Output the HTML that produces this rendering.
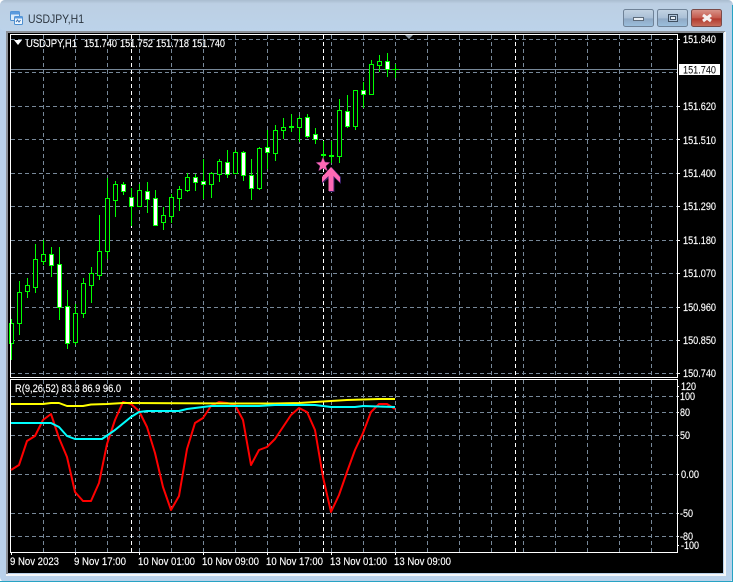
<!DOCTYPE html>
<html><head><meta charset="utf-8"><style>
html,body{margin:0;padding:0;background:#fff}
body{width:735px;height:583px;overflow:hidden}
svg{display:block}
text{font-family:"Liberation Sans",sans-serif;font-size:11px;fill:#fff;stroke:#fff;stroke-width:.15}
</style></head><body>
<svg width="735" height="583" viewBox="0 0 735 583" xmlns="http://www.w3.org/2000/svg">
<defs>
<linearGradient id="tb" x1="0" y1="0" x2="0" y2="1"><stop offset="0" stop-color="#a9bccf"/><stop offset=".12" stop-color="#bccfe3"/><stop offset="1" stop-color="#bcd3ea"/></linearGradient>
<linearGradient id="bb" x1="0" y1="0" x2="0" y2="1"><stop offset="0" stop-color="#c3d3e3"/><stop offset=".5" stop-color="#a9bfd6"/><stop offset=".55" stop-color="#8fa9c5"/><stop offset="1" stop-color="#9cc0de"/></linearGradient>
<linearGradient id="cb" x1="0" y1="0" x2="0" y2="1"><stop offset="0" stop-color="#d9968c"/><stop offset=".5" stop-color="#c4594c"/><stop offset=".55" stop-color="#b23a2e"/><stop offset="1" stop-color="#c8705f"/></linearGradient>
</defs>
<rect x="0" y="0" width="733" height="582" rx="5" fill="#b9d1ea"/>
<rect x="0" y="0" width="733" height="31" rx="5" fill="url(#tb)"/>
<path d="M732.5 5V581.5H0" fill="none" stroke="#27a3c4" stroke-width="1"/>
<!-- title -->
<rect x="10.5" y="11.5" width="9" height="9" rx="1" fill="#dcebfa" stroke="#4d8fd0"/>
<rect x="10.5" y="11.5" width="9" height="3" fill="#5a9ade"/>
<rect x="14.5" y="16.5" width="8" height="8" rx="1" fill="#eef6fd" stroke="#4d8fd0"/>
<rect x="14.5" y="16.5" width="8" height="2" fill="#5a9ade"/>
<path d="M16 22l1.5-2 1.500 2 1.500-2" fill="none" stroke="#3a70b0"/>
<text x="28" y="23" style="font-size:12px;fill:#2b3540;stroke:none" textLength="56" lengthAdjust="spacingAndGlyphs">USDJPY,H1</text>
<!-- buttons -->
<rect x="623.500" y="9.500" width="30" height="17" rx="2" fill="url(#bb)" stroke="#6f8297"/>
<rect x="657.500" y="9.500" width="30" height="17" rx="2" fill="url(#bb)" stroke="#6f8297"/>
<rect x="691.500" y="9.500" width="30" height="17" rx="2" fill="url(#cb)" stroke="#7a4a48"/>
<rect x="633.500" y="17.500" width="10" height="3" fill="#e8eef4" stroke="#5d6b7a"/>
<rect x="668.500" y="14.500" width="9" height="7" fill="#aec3d9" stroke="#3f4f60"/>
<rect x="670.500" y="16.500" width="5" height="3" fill="#e8eef4" stroke="#3f4f60" stroke-width="1"/>
<path d="M703 15l8 6M711 15l-8 6" stroke="#f5f1f0" stroke-width="3" fill="none"/>
<!-- client -->
<rect x="6" y="31" width="719" height="2" fill="#8a8f96"/>
<rect x="6" y="31" width="2" height="544" fill="#8a8f96"/>
<rect x="8" y="33" width="715" height="540" fill="#000"/>
<path d="M725 32V575H6" fill="none" stroke="#f4f6f8" stroke-width="2"/>
<!-- grid main -->
<g stroke="#778899" stroke-dasharray="4 3" fill="none">
<path d="M11 39.500H677M11 72.500H677M11 106.500H677M11 139.500H677M11 173.500H677M11 206.500H677M11 240.500H677M11 273.500H677M11 307.500H677M11 340.500H677M11 373.500H677"/>
<path d="M43.500 35V377M75.500 35V377M107.500 35V377M139.500 35V377M171.500 35V377M203.500 35V377M235.500 35V377M267.500 35V377M299.500 35V377M331.500 35V377M363.500 35V377M395.500 35V377M427.500 35V377M459.500 35V377M491.500 35V377M523.500 35V377M555.500 35V377M587.500 35V377M619.500 35V377M651.500 35V377"/>
<path d="M11 396.500H677M11 412.500H677M11 435.500H677M11 474.500H677M11 513.500H677M11 536.500H677"/>
<path d="M43.500 380V552M75.500 380V552M107.500 380V552M139.500 380V552M171.500 380V552M203.500 380V552M235.500 380V552M267.500 380V552M299.500 380V552M331.500 380V552M363.500 380V552M395.500 380V552M427.500 380V552M459.500 380V552M491.500 380V552M523.500 380V552M555.500 380V552M587.500 380V552M619.500 380V552M651.500 380V552"/>
</g>
<g stroke="#fff" stroke-dasharray="4 3" fill="none">
<path d="M131.500 35V377M323.500 35V377M515.500 35V377M131.500 380V552M323.500 380V552M515.500 380V552"/>
</g>
<path d="M11 69.500H677" stroke="#778899"/>
<!-- wicks -->
<path fill="none" stroke="#0f0" d="M11.500 319V360M19.500 281V335M27.500 278V298M35.500 244V293M43.500 240V265M51.500 247V277M59.500 247V320M67.500 290V349M75.500 304V345M83.500 278V318M91.500 267V303M99.500 215V280M107.500 178V259M115.500 181V217M123.500 182V195M131.500 188V226M139.500 184V207M147.500 182V213M155.500 190V226M163.500 207V230M171.500 194V223M179.500 186V211M187.500 173V192M195.500 174V191M203.500 159V199M211.500 172V198M219.500 159V182M227.500 150V178M235.500 150V174M243.500 151V181M251.500 159V200M259.500 147V190M267.500 130V169M275.500 125V161M283.500 118V139M291.500 114V132M299.500 116V142M307.500 114V138M315.500 128V144M323.500 141V160M331.500 141V163M339.500 99V163M347.500 95V128M355.500 90V130M363.500 82V108M371.500 60V94M379.500 55V72M387.500 53V77M395.500 64V78M392 69.500H399"/>
<!-- hollow bodies -->
<g fill="#000" stroke="#0f0">
<rect x="9.500" y="323.500" width="4" height="20"/>
<rect x="17.500" y="292.500" width="4" height="31"/>
<rect x="25.500" y="285.500" width="4" height="6"/>
<rect x="33.500" y="259.500" width="4" height="28"/>
<rect x="41.500" y="254.500" width="4" height="7"/>
<rect x="73.500" y="313.500" width="4" height="29"/>
<rect x="81.500" y="283.500" width="4" height="30"/>
<rect x="89.500" y="273.500" width="4" height="12"/>
<rect x="97.500" y="251.500" width="4" height="24"/>
<rect x="105.500" y="198.500" width="4" height="53"/>
<rect x="113.500" y="184.500" width="4" height="16"/>
<rect x="137.500" y="190.500" width="4" height="16"/>
<rect x="161.500" y="215.500" width="4" height="7"/>
<rect x="169.500" y="197.500" width="4" height="19"/>
<rect x="177.500" y="189.500" width="4" height="9"/>
<rect x="185.500" y="177.500" width="4" height="13"/>
<rect x="209.500" y="173.500" width="4" height="11"/>
<rect x="217.500" y="161.500" width="4" height="13"/>
<rect x="233.500" y="152.500" width="4" height="21"/>
<rect x="257.500" y="148.500" width="4" height="40"/>
<rect x="273.500" y="130.500" width="4" height="23"/>
<rect x="281.500" y="127.500" width="4" height="3"/>
<rect x="297.500" y="118.500" width="4" height="9"/>
<rect x="337.500" y="110.500" width="4" height="46"/>
<rect x="353.500" y="90.500" width="4" height="36"/>
<rect x="369.500" y="64.500" width="4" height="30"/>
<rect x="377.500" y="61.500" width="4" height="4"/>
</g>
<!-- white bodies -->
<g fill="#fff" stroke="#0f0">
<rect x="49.500" y="254.500" width="4" height="11"/>
<rect x="57.500" y="264.500" width="4" height="43"/>
<rect x="65.500" y="306.500" width="4" height="37"/>
<rect x="121.500" y="184.500" width="4" height="7"/>
<rect x="129.500" y="197.500" width="4" height="9"/>
<rect x="145.500" y="191.500" width="4" height="8"/>
<rect x="153.500" y="198.500" width="4" height="27"/>
<rect x="193.500" y="177.500" width="4" height="5"/>
<rect x="201.500" y="181.500" width="4" height="3"/>
<rect x="225.500" y="162.500" width="4" height="12"/>
<rect x="241.500" y="152.500" width="4" height="23"/>
<rect x="249.500" y="175.500" width="4" height="13"/>
<rect x="265.500" y="147.500" width="4" height="5"/>
<rect x="305.500" y="117.500" width="4" height="19"/>
<rect x="313.500" y="134.500" width="4" height="5"/>
<rect x="345.500" y="111.500" width="4" height="15"/>
<rect x="361.500" y="90.500" width="4" height="4"/>
<rect x="385.500" y="61.500" width="4" height="8"/>
</g>
<path fill="#0f0" d="M289 126h5v2h-5zM321 154h5v2h-5zM329 155h5v2h-5z"/>
<!-- panel frames -->
<path d="M10.500 34.500H677.500V377.500H10.500ZM10.500 379.500H677.500V552.500H10.500Z" fill="none" stroke="#fff"/>
<path d="M405 35h8l-4 4z" fill="#8a97a3"/>
<!-- star & arrow -->
<polygon points="323,157 325,162 330,162.500 326,166 327.500,171 323,168.300 318.500,171 320,166 316,162.500 321,162" fill="#ff69b4" stroke="#5a2060" stroke-width=".5"/>
<polygon points="331.500,167 341,177 341,184 334.500,178 334.500,192 329,192 329,178 322,184 322,177" fill="#3b1f66"/>
<polygon points="331,167 340,177 340,182.500 333.500,176 333.500,191 328.500,191 328.500,176 322,182.500 322,177" fill="#ff69b4"/>
<!-- indicator lines -->
<g fill="none" stroke-width="2" stroke-linejoin="round">
<polyline stroke="#f00" points="11,470 19,465 27,441 35,436 43,420 51,414 59,438 67,457 75,492 83,501 91,501 99,483 107,444 115,420 123,402 131,404 139,411 147,427 155,453 163,487 171,510 179,496 187,449 195,423 203,418 211,406 219,402 227,403 235,405 243,420 251,465 259,450 267,447 275,439 283,427 291,415 299,408 307,412 315,430 323,477 331,512 339,495 347,472 355,450 363,433 371,412 379,404 387,404 395,409"/>
<polyline stroke="#ff0" points="11,404 43,404 51,403 59,403 67,406 83,406 91,404.500 107,404 123,403 235,403.500 275,403.500 299,403 315,402 331,401 347,400 379,399 395,399"/>
<polyline stroke="#0ff" points="11,423 51,423 59,427 67,436 75,439 102,439 115,430 131,417 139,412 147,411 179,411 187,409 203,407 211,406 235,406 259,406 275,405 315,405 331,407 355,407 363,406 395,407"/>
</g>
<!-- ticks -->
<path stroke="#fff" fill="none" d="M677 39.500h3M677 106.500h3M677 139.500h3M677 173.500h3M677 206.500h3M677 240.500h3M677 273.500h3M677 307.500h3M677 340.500h3M677 373.500h3M677 396.500h2M677 412.500h2M677 435.500h2M677 474.500h2M677 513.500h2M677 536.500h2M677 386.500h2M677 545.500h2M11.500 552v3M75.500 552v3M139.500 552v3M203.500 552v3M267.500 552v3M331.500 552v3M395.500 552v3"/>
<!-- header texts -->
<path d="M14 40h8l-4 5z" fill="#fff"/>
<text x="26" y="47" textLength="51" lengthAdjust="spacingAndGlyphs">USDJPY,H1</text>
<text x="84" y="47" textLength="33" lengthAdjust="spacingAndGlyphs">151.740</text>
<text x="120" y="47" textLength="33" lengthAdjust="spacingAndGlyphs">151.752</text>
<text x="156" y="47" textLength="33" lengthAdjust="spacingAndGlyphs">151.718</text>
<text x="192" y="47" textLength="33" lengthAdjust="spacingAndGlyphs">151.740</text>
<text x="15" y="392" textLength="106" lengthAdjust="spacingAndGlyphs">R(9,26,52) 83.3 86.9 96.0</text>
<!-- price labels -->
<text x="683" y="43" textLength="33" lengthAdjust="spacingAndGlyphs">151.840</text>
<rect x="679" y="64" width="41" height="11" fill="#fff"/>
<text x="683" y="73.500" textLength="33" lengthAdjust="spacingAndGlyphs" style="fill:#000;stroke:none">151.740</text>
<text x="683" y="110" textLength="33" lengthAdjust="spacingAndGlyphs">151.620</text>
<text x="683" y="144" textLength="33" lengthAdjust="spacingAndGlyphs">151.510</text>
<text x="683" y="177" textLength="33" lengthAdjust="spacingAndGlyphs">151.400</text>
<text x="683" y="210" textLength="33" lengthAdjust="spacingAndGlyphs">151.290</text>
<text x="683" y="244" textLength="33" lengthAdjust="spacingAndGlyphs">151.180</text>
<text x="683" y="277" textLength="33" lengthAdjust="spacingAndGlyphs">151.070</text>
<text x="683" y="311" textLength="33" lengthAdjust="spacingAndGlyphs">150.960</text>
<text x="683" y="344" textLength="33" lengthAdjust="spacingAndGlyphs">150.850</text>
<text x="683" y="377" textLength="33" lengthAdjust="spacingAndGlyphs">150.740</text>
<!-- indicator labels -->
<text x="681" y="390" textLength="15" lengthAdjust="spacingAndGlyphs">120</text>
<text x="680" y="400" textLength="15" lengthAdjust="spacingAndGlyphs">100</text>
<text x="680" y="416" textLength="10" lengthAdjust="spacingAndGlyphs">80</text>
<text x="680" y="439" textLength="10" lengthAdjust="spacingAndGlyphs">50</text>
<text x="681" y="478" textLength="18" lengthAdjust="spacingAndGlyphs">0.00</text>
<text x="680" y="517" textLength="13" lengthAdjust="spacingAndGlyphs">-50</text>
<text x="680" y="540" textLength="13" lengthAdjust="spacingAndGlyphs">-80</text>
<text x="681" y="549" textLength="18" lengthAdjust="spacingAndGlyphs">-100</text>
<!-- time labels -->
<text x="10" y="565" textLength="49" lengthAdjust="spacingAndGlyphs">9 Nov 2023</text>
<text x="74" y="565" textLength="52" lengthAdjust="spacingAndGlyphs">9 Nov 17:00</text>
<text x="138" y="565" textLength="57" lengthAdjust="spacingAndGlyphs">10 Nov 01:00</text>
<text x="202" y="565" textLength="57" lengthAdjust="spacingAndGlyphs">10 Nov 09:00</text>
<text x="266" y="565" textLength="57" lengthAdjust="spacingAndGlyphs">10 Nov 17:00</text>
<text x="330" y="565" textLength="57" lengthAdjust="spacingAndGlyphs">13 Nov 01:00</text>
<text x="394" y="565" textLength="57" lengthAdjust="spacingAndGlyphs">13 Nov 09:00</text>
</svg>
</body></html>
